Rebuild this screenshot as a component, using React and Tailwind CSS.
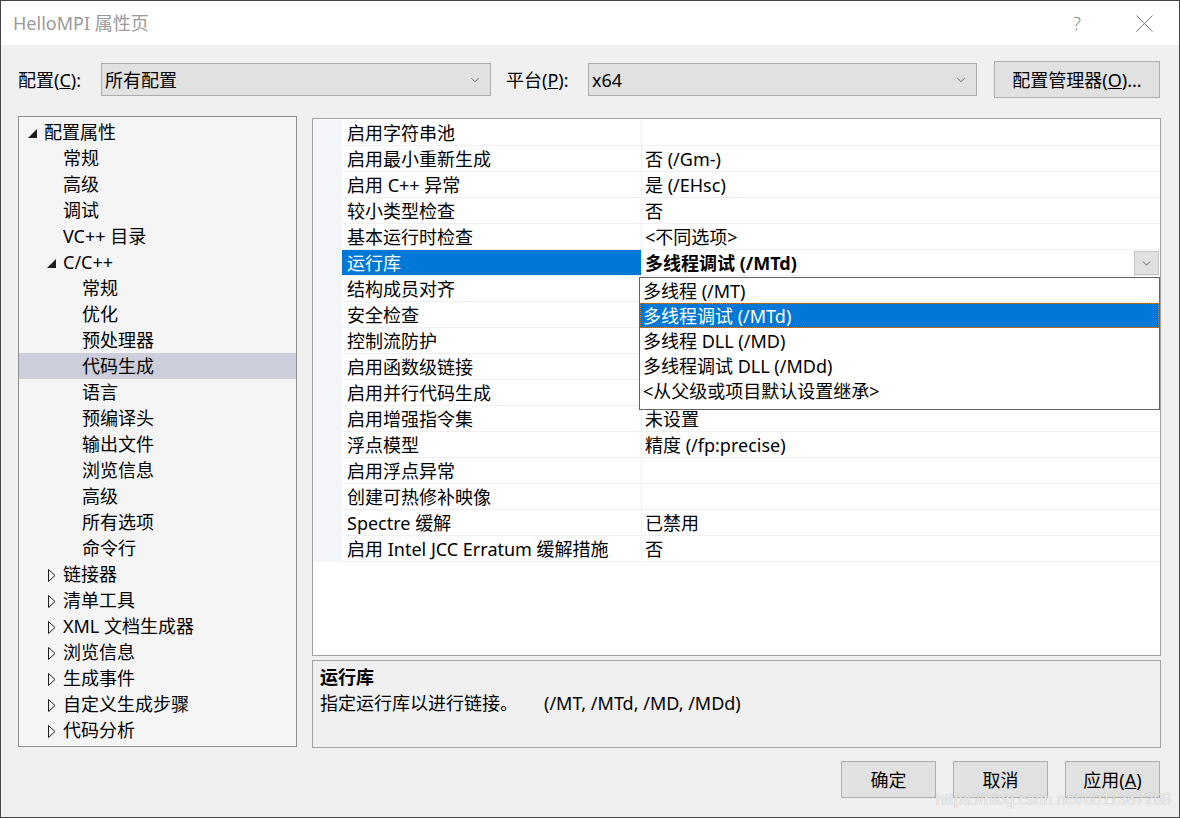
import { ChevronDown } from "lucide-react";

const tree = [
  { t: "配置属性", l: 0, e: "open" },
  { t: "常规", l: 1 },
  { t: "高级", l: 1 },
  { t: "调试", l: 1 },
  { t: "VC++ 目录", l: 1 },
  { t: "C/C++", l: 1, e: "open" },
  { t: "常规", l: 2 },
  { t: "优化", l: 2 },
  { t: "预处理器", l: 2 },
  { t: "代码生成", l: 2, sel: true },
  { t: "语言", l: 2 },
  { t: "预编译头", l: 2 },
  { t: "输出文件", l: 2 },
  { t: "浏览信息", l: 2 },
  { t: "高级", l: 2 },
  { t: "所有选项", l: 2 },
  { t: "命令行", l: 2 },
  { t: "链接器", l: 1, e: "closed" },
  { t: "清单工具", l: 1, e: "closed" },
  { t: "XML 文档生成器", l: 1, e: "closed" },
  { t: "浏览信息", l: 1, e: "closed" },
  { t: "生成事件", l: 1, e: "closed" },
  { t: "自定义生成步骤", l: 1, e: "closed" },
  { t: "代码分析", l: 1, e: "closed" },
];

const indent = ["pl-[8px]", "pl-[27px]", "pl-[46px]"];

const props = [
  ["启用字符串池", ""],
  ["启用最小重新生成", "否 (/Gm-)"],
  ["启用 C++ 异常", "是 (/EHsc)"],
  ["较小类型检查", "否"],
  ["基本运行时检查", "<不同选项>"],
  ["运行库", "多线程调试 (/MTd)", true],
  ["结构成员对齐", ""],
  ["安全检查", ""],
  ["控制流防护", ""],
  ["启用函数级链接", ""],
  ["启用并行代码生成", ""],
  ["启用增强指令集", "未设置"],
  ["浮点模型", "精度 (/fp:precise)"],
  ["启用浮点异常", ""],
  ["创建可热修补映像", ""],
  ["Spectre 缓解", "已禁用"],
  ["启用 Intel JCC Erratum 缓解措施", "否"],
];

const options = [
  "多线程 (/MT)",
  "多线程调试 (/MTd)",
  "多线程 DLL (/MD)",
  "多线程调试 DLL (/MDd)",
  "<从父级或项目默认设置继承>",
];

function Arrow({ kind }) {
  if (kind === "open") {
    return (
      <svg width="9" height="9" viewBox="0 0 9 9" className="ml-[1px] mt-[3px]">
        <polygon points="9,0 9,9 0,9" fill="#1e1e1e" />
      </svg>
    );
  }
  return (
    <svg width="8" height="13" viewBox="0 0 8 13" className="ml-[2px] mt-[2px]">
      <polygon points="0.5,0.5 7,6.5 0.5,12.5" fill="none" stroke="#1e1e1e" strokeWidth="1" />
    </svg>
  );
}

function Combo({ value, width }) {
  return (
    <div className={`${width} h-[33px] bg-[#e1e1e1] border border-[#acacac] flex items-center pl-[3px] pr-[8px]`}>
      <span className="flex-1">{value}</span>
      <ChevronDown className="w-[14px] h-[14px] text-[#555]" strokeWidth={1.5} />
    </div>
  );
}

function Btn({ children, width = "w-[95px]" }) {
  return (
    <button className={`${width} h-[37px] bg-[#e1e1e1] border border-[#adadad] flex items-center justify-center`}>
      {children}
    </button>
  );
}

export default function App() {
  return (
    <div className="w-[1180px] h-[818px] border border-[#454545] bg-[#f0f0f0] flex flex-col text-[18px] text-black leading-[26px] font-['Noto_Sans','Noto_Sans_CJK_SC',sans-serif] relative overflow-hidden">
      {/* Title bar */}
      <div className="h-[44px] bg-white flex items-center pl-[12px] shrink-0">
        <span className="flex-1 text-[#9a9a9a]">HelloMPI 属性页</span>
        <span className="text-[#8a8a8a] font-light mr-[55px]">?</span>
        <svg width="17" height="17" viewBox="0 0 17 17" className="mr-[26px]">
          <line x1="0.5" y1="0.5" x2="16.5" y2="16.5" stroke="#777" strokeWidth="1" />
          <line x1="16.5" y1="0.5" x2="0.5" y2="16.5" stroke="#777" strokeWidth="1" />
        </svg>
      </div>

      {/* Configuration row */}
      <div className="flex items-center h-[37px] mt-[16px] pl-[17px] shrink-0">
        <span className="w-[83px]">配置(<u>C</u>):</span>
        <Combo value="所有配置" width="w-[390px]" />
        <span className="w-[82px] ml-[15px]">平台(<u>P</u>):</span>
        <Combo value="x64" width="w-[389px]" />
        <div className="ml-[17px]">
          <Btn width="w-[166px]">配置管理器(<u>O</u>)...</Btn>
        </div>
      </div>

      {/* Main area */}
      <div className="flex mt-[18px] pl-[17px] shrink-0">
        {/* Tree */}
        <div className="w-[279px] h-[631px] border border-[#8f8f8f] bg-[#f5f5f5] pt-[2px]">
          {tree.map((n, i) => (
            <div
              key={i}
              className={`h-[26px] flex items-start ${indent[n.l]} ${n.sel ? "bg-[#cccedb]" : ""}`}
            >
              <div className="w-[17px] h-[26px] flex items-center">
                {n.e && <Arrow kind={n.e} />}
              </div>
              <span className="whitespace-nowrap">{n.t}</span>
            </div>
          ))}
        </div>

        {/* Right column */}
        <div className="ml-[15px] w-[849px] pt-[2px] flex flex-col gap-[4px]">
          {/* Property grid */}
          <div className="h-[538px] border border-[#a0a0a0] bg-white relative pt-[1px]">
            {props.map(([name, val, sel], i) => (
              <div key={i} className="flex h-[26px]">
                <div className="w-[29px] bg-[#f4f5f8]" />
                <div
                  className={`w-[299px] pl-[5px] border-b border-[#f0f0f0] whitespace-nowrap ${sel ? "bg-[#0078d7] text-white border-[#0078d7]" : ""}`}
                >
                  {name}
                </div>
                <div className="flex-1 border-l border-b border-[#f0f0f0] pl-[3px] flex items-start whitespace-nowrap">
                  {sel ? (
                    <>
                      <span className="flex-1 font-bold">{val}</span>
                      <div className="w-[25px] h-[24px] mt-[1px] mr-[1px] bg-[#e1e1e1] border border-[#c4c4c4] flex items-center justify-center">
                        <ChevronDown className="w-[13px] h-[13px] text-[#444]" strokeWidth={1.5} />
                      </div>
                    </>
                  ) : (
                    <span>{val}</span>
                  )}
                </div>
              </div>
            ))}

            {/* Dropdown list */}
            <div className="absolute left-[326px] right-0 top-[158px] h-[133px] bg-white border border-[#646464] pt-0">
              {options.map((o, i) => (
                <div
                  key={i}
                  className={`h-[25px] leading-[24px] pl-[2px] whitespace-nowrap ${i === 1 ? "bg-[#0078d7] text-white border border-dotted border-[#d27c1e]" : "border border-transparent"}`}
                >
                  {o}
                </div>
              ))}
            </div>
          </div>

          {/* Description */}
          <div className="h-[88px] border border-[#a0a0a0] bg-[#f0f0f0] pl-[7px] pt-[3px]">
            <div className="font-bold">运行库</div>
            <div className="flex whitespace-nowrap">
              <span>指定运行库以进行链接。</span>
              <span className="ml-[26px]">(/MT, /MTd, /MD, /MDd)</span>
            </div>
          </div>
        </div>
      </div>

      {/* Bottom buttons */}
      <div className="flex justify-end gap-[17px] pr-[19px] mt-[13px]">
        <Btn>确定</Btn>
        <Btn>取消</Btn>
        <Btn>应用(<u>A</u>)</Btn>
      </div>

      {/* Watermark */}
      <span className="absolute left-[935px] top-[789px] text-[16px] leading-[20px] text-white/80 font-['Liberation_Sans',sans-serif] [text-shadow:0_0_1px_rgba(0,0,0,0.35)]">
        https://blog.csdn.net/u011367208
      </span>
    </div>
  );
}
